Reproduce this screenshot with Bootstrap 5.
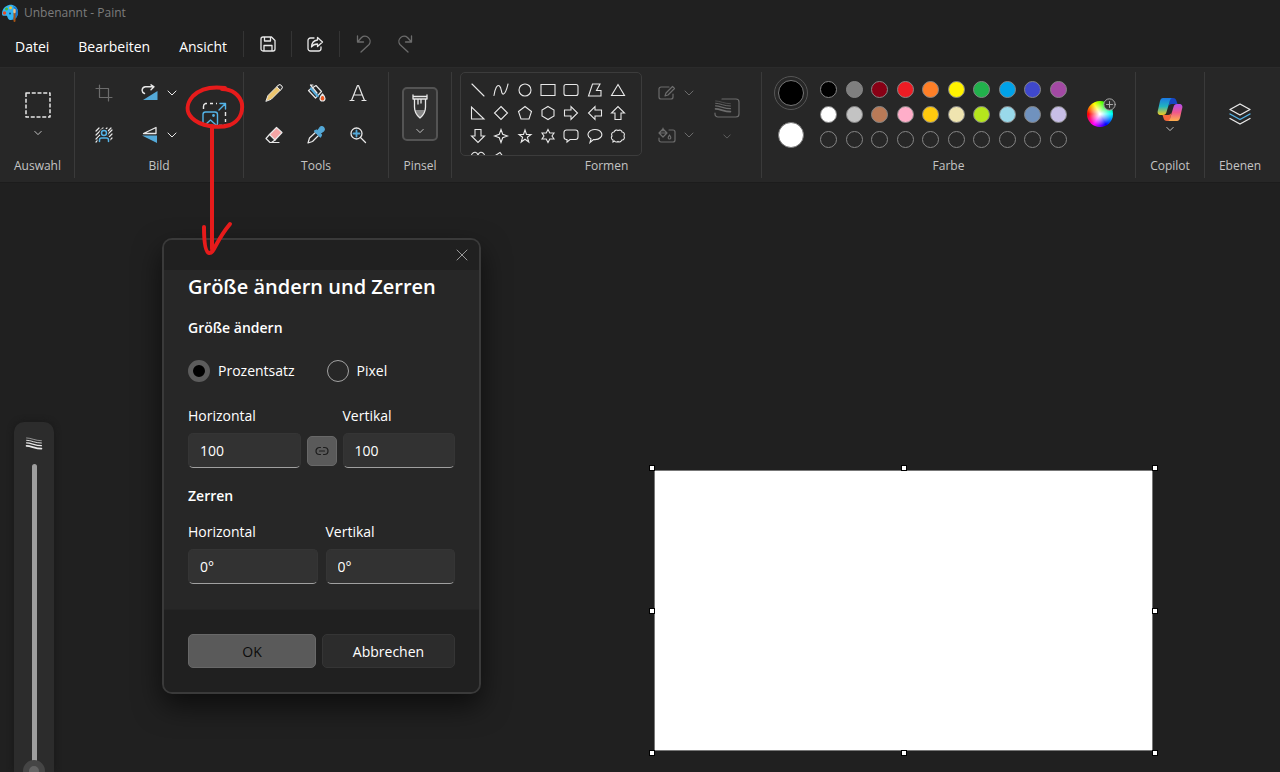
<!DOCTYPE html>
<html lang="de" data-bs-theme="dark">
<head>
<meta charset="utf-8">
<meta name="viewport" content="width=device-width, initial-scale=1">
<title>Unbenannt - Paint</title>
<link href="https://cdn.jsdelivr.net/npm/bootstrap@5.3.0/dist/css/bootstrap.min.css" rel="stylesheet">
<style>
  body { background: #202020; color: #fff; font: 14px/20px "Open Sans", "Noto Sans", sans-serif; }
  svg { display: block; flex: none; fill: none; stroke: #e8e8e8; stroke-linecap: round; stroke-linejoin: round; }
  button.plain { background: none; border: 0; padding: 0; color: inherit; display: flex; align-items: center; justify-content: center; }
  .dim svg { stroke: #6c6c6c; }

  .title-row { height: 25px; padding-left: 2px; gap: 6px; color: #7c7c7c; font-size: 12px; }
  .menu-row { height: 42px; padding: 0 0 4px 1px; }
  .menu-row .menu-word { padding: 5px 14px 0 15px; height: 38px; }
  .menu-row .menu-word:first-child { padding-left: 14px; }
  .menu-row .tool { width: 48px; height: 26px; border-left: 1px solid #343434; }
  .menu-row .tool-group { margin-left: 2px; }
  .menu-row .redo { width: 36px; border: 0; }

  .ribbon { display: grid; grid-template-columns: 74fr 169fr 145fr 63fr 310fr 374fr 69fr 70fr; padding: 4px 5px 4px 1px; background: #272727; border-top: 1px solid #2b2b2b; border-bottom: 1px solid #1c1c1c; }
  .group { display: flex; flex-direction: column; border-right: 1px solid #3a3a3a; min-width: 0; }
  .group:last-child { border-right: 0; }
  .group-label { font-size: 12px; color: #c4c4c4; text-align: center; padding-bottom: 2px; }
  .group-body { height: 84px; display: flex; align-items: center; justify-content: center; }
  .stack { flex-direction: column; gap: 8px; }
  .cells { display: grid; grid-auto-rows: 42px; }
  .cells-image { grid-template-columns: repeat(3, 55px); }
  .cells-tools { grid-template-columns: repeat(3, 42px); }
  .split { gap: 8px !important; }
  .tall { grid-row: 1 / 3; grid-column: 3; }
  .brush { width: 36px; height: 54px; flex-direction: column; gap: 9px; background: #303030 !important; border: 2px solid #545454 !important; border-radius: 5px; }
  .shape-box { width: 182px; height: 84px; padding: 5px 11px 0 5px; overflow: hidden; border: 1px solid #3c3c3c; border-radius: 5px; display: grid; grid-template-columns: repeat(7, 1fr); grid-auto-rows: 23px; }
  .shape-box svg { stroke-width: 1.1; stroke-linejoin: miter; }
  .big-dot { width: 26px; height: 26px; border-radius: 50%; border: 1px solid #777 !important; }
  .chosen { outline: 1px solid #555; outline-offset: 3px; }
  .swatches { width: 255px; display: grid; grid-template-columns: repeat(10, 1fr); grid-auto-rows: 25px; justify-items: center; align-items: center; }
  .swatch { width: 17px; height: 17px; border: 1px solid #858585 !important; border-radius: 50%; }
  .wheel { position: relative; width: 26px; height: 26px; border-radius: 50%; background: radial-gradient(closest-side, #fff 5%, #fff0 90%), conic-gradient(from 270deg, red, yellow, lime, cyan, blue, magenta, red) !important; }
  .wheel svg { position: absolute; top: -3px; right: -3px; }

  .workspace { position: relative; min-height: 0; overflow: hidden; }
  .size-panel { width: 40px; margin: 239px 0 0 14px; padding-top: 15px; background: #2c2c2c; border-radius: 10px 10px 0 0; box-shadow: 0 0 6px #181818; }
  .slider-well { width: 40px; height: 318px; margin-top: 14px; display: flex; align-items: center; justify-content: center; }
  .slider-well input { appearance: none; flex: none; width: 318px; height: 22px; margin: 0; background: none; transform: rotate(-90deg); }
  .slider-well input::-webkit-slider-runnable-track { height: 5px; background: #9e9e9e; border-radius: 3px; }
  .slider-well input::-webkit-slider-thumb { appearance: none; width: 22px; height: 22px; margin-top: -9px; border-radius: 50%; background: #636363; border: 6px solid #454545; }
  .sheet { position: relative; width: 499px; height: 281px; margin: 0 127px 21px auto; background: #fff; border: 1px solid #777; }
  .grip { position: absolute; width: 6px; height: 6px; background: #fff; border: 1px solid #000; }
  .g-top { top: -6px; } .g-mid { top: calc(50% - 3px); } .g-low { bottom: -6px; }
  .g-left { left: -6px; } .g-center { left: calc(50% - 3px); } .g-right { right: -6px; }

  .resize-dialog { position: absolute; top: 55px; left: 162px; width: 319px; background: #272727; border: 2px solid #3a3a3a; border-radius: 10px; box-shadow: 0 12px 28px #0009; overflow: hidden; }
  .dialog-top { height: 30px; padding-right: 11px; background: #202020; }
  .dialog-top svg, .dialog-top button { stroke: #999; }
  .dialog-main { padding: 0 24px 25px; }
  .dialog-main h1 { font-size: 20px; line-height: 34px; font-weight: 600; margin: 0 0 14px; white-space: nowrap; }
  .dialog-main h2 { font-size: 14px; line-height: 20px; font-weight: 600; margin: 0; }
  .choice { gap: 32px; margin: 22px 0 24px; }
  .choice label { gap: 8px; }
  .choice input { appearance: none; width: 22px; height: 22px; margin: 0; border: 1px solid #a2a2a2; border-radius: 50%; }
  .choice input:checked { border: 5px solid #5c5c5c; background: #000; }
  .pair { gap: 6px; }
  .field { flex: 1 1 0; min-width: 0; }
  .field label { display: block; margin-bottom: 7px; }
  .field input { width: 100%; height: 35px; padding: 0 11px; color: #fff; background: #323232; border: 1px solid #353535; border-bottom-color: #a0a0a0; border-radius: 5px; }
  .link-both { width: 30px; height: 30px; margin-bottom: 2px; background: #5a5a5a !important; border: 1px solid #686868 !important; border-radius: 5px; }
  .link-both svg { stroke: #1c1c1c; }
  .dialog-main .skew-title { margin: 18px 0 16px; }
  .dialog-foot { display: grid; grid-template-columns: 127fr 132fr; gap: 6px; padding: 24px; background: #202020; border-top: 1px solid #242424; }
  .dialog-foot .btn { height: 34px; padding: 0; font-size: 14px; border: 1px solid #353535; border-radius: 5px; background: #2c2c2c; color: #fff; }
  .dialog-foot .btn-ok { background: #5a5a5a; border-color: #686868; color: #0c0c0c; }

  .red-mark { position: absolute; left: 180px; top: 80px; z-index: 5; pointer-events: none; stroke: #e61b1b; }
</style>
</head>
<body>
<svg width="0" height="0" class="position-absolute" aria-hidden="true">
  <symbol id="chev" viewBox="0 0 10 6"><path d="M1 1l4 4 4-4"/></symbol>
  <symbol id="waves" viewBox="0 0 18 14"><path stroke-width=".6" d="M1 1c5 0 9 3 16 3"/><path stroke-width="1" d="M1 3.500c5 0 9 3 16 3"/><path stroke-width="1.400" d="M1 6.300c5 0 9 3 16 3"/><path stroke-width="1.900" d="M1 9.500c5 0 9 3 16 3"/></symbol>
</svg>
<div class="vh-100 d-flex flex-column overflow-hidden">
  <header>
    <div class="title-row d-flex align-items-center">
      <svg width="16" height="18" viewBox="0 0 16 18">
        <g stroke="none"><path d="M7 1C10 0 16 2 16 8c0 5-3 8-7 8-3 0-3-2-4-4-1-1-5 1-5-2C0 5 3 2 7 1z" fill="#35b4f2"/>
        <path d="M11 2c3 1 5 3 5 6 0 4-2 7-6 8 3-4 4-8 1-14z" fill="#1675cc"/>
        <circle cx="2.500" cy="9" r="1.700" fill="#e84b26"/><circle cx="4.500" cy="5" r="1.500" fill="#4bbb38"/><circle cx="8.500" cy="3.700" r="1.500" fill="#f3c52c"/><circle cx="8" cy="9.500" r="1" fill="#164b79"/></g>
        <path d="M12.500 9v8" stroke="#a85414" stroke-width="2"/><path d="M12.500 6v2" stroke="#f2c184" stroke-width="2.400"/>
      </svg>
      <span>Unbenannt - Paint</span>
    </div>
    <nav class="menu-row d-flex align-items-center" aria-label="Menü">
      <button class="plain menu-word">Datei</button>
      <button class="plain menu-word">Bearbeiten</button>
      <button class="plain menu-word">Ansicht</button>
      <span class="tool-group d-flex">
        <button class="plain tool" aria-label="Speichern"><svg width="16" height="16" stroke-width="1.300"><path d="M3 1h8.500L15 4.500V13a2 2 0 0 1-2 2H3a2 2 0 0 1-2-2V3a2 2 0 0 1 2-2zM4.500 1v4h6V1M4 15V9.500h8V15"/></svg></button>
        <button class="plain tool" aria-label="Teilen"><svg width="17" height="17" stroke-width="1.300"><path d="M7 2H3.500A2.500 2.500 0 0 0 1 4.500v8A2.500 2.500 0 0 0 3.500 15h8a2.500 2.500 0 0 0 2.500-2.500V11M10.500 1.500l5 4.500-5 4.500V8C7.500 8 6 8.700 4.500 11c.2-4 2.500-6.500 6-7z"/></svg></button>
      </span>
      <span class="dim d-flex">
        <button class="plain tool" aria-label="Rückgängig"><svg width="16" height="18" stroke-width="1.300"><path d="M1.500 1v6h6M1.500 7l4-4.500a5.200 5.200 0 0 1 7.600 7L5 17"/></svg></button>
        <button class="plain tool redo" aria-label="Wiederholen"><svg width="16" height="18" stroke-width="1.300"><path d="M14.500 1v6h-6M14.500 7l-4-4.500a5.200 5.200 0 0 0-7.600 7L11 17"/></svg></button>
      </span>
    </nav>
    <div class="ribbon">
      <section class="group">
        <div class="group-body"><button class="plain stack" aria-label="Auswahl">
          <svg width="26" height="26" stroke-width="1.500"><path stroke-dasharray="4 1.750" stroke-linecap="butt" d="M1 1h24v24H1z"/></svg>
          <svg width="8" height="6" class="mt-1"><use href="#chev"/></svg></button></div>
        <div class="group-label">Auswahl</div>
      </section>
      <section class="group">
        <div class="group-body"><div class="cells cells-image">
          <button class="plain dim" aria-label="Zuschneiden"><svg width="18" height="18" stroke-width="1.200"><path d="M4.500 1v12.500H17M1 4.500h12.500V17"/></svg></button>
          <button class="plain split" aria-label="Drehen"><svg width="18" height="18" stroke-width="1.400"><path d="M3.500 9.500a3.500 3.500 0 0 1 1-6.800H13M10 .8l3 2-3 3"/><path d="M16.500 7v9H2z" fill="#54a9d8" stroke="none"/></svg><svg width="10" height="6"><use href="#chev"/></svg></button>
          <button class="plain tall" aria-label="Größe ändern und Zerren"><svg width="25" height="25" stroke-width="1.400"><path d="M1.500 7V4.500a3 3 0 0 1 2-3H5M8 1.500h3M14 1.500h1M23.500 10v4M23.500 17v3M23.500 22.500l-1 1M20 23.500h-3" stroke-linecap="butt"/><g stroke="#54b4e8"><path d="M17 8l6.500-6.500M18 1.500h5.500V7"/><rect x="1" y="10" width="14.500" height="14" rx="2.500"/><path d="M3 23l5.500-5 5.500 5"/><circle cx="11.500" cy="13.500" r=".7"/></g></svg></button>
          <button class="plain" aria-label="Hintergrund entfernen"><svg width="18" height="16" stroke-width="1.200"><path d="M1 4l3-3M1 8l7-7M1 12L12 1M1 15l4-4M13 4l3-3M12 8l5-5M13 11l4-4M14 14l3-3"/><g stroke="#272727" stroke-width="4" fill="#272727"><circle cx="9" cy="6" r="2.500"/><path d="M4.500 15v-2a2 2 0 0 1 2-2h5a2 2 0 0 1 2 2v2"/></g><g stroke="#54b4e8" stroke-width="1.500"><circle cx="9" cy="6" r="2.500"/><path d="M4.500 14.500v-1.500a2 2 0 0 1 2-2h5a2 2 0 0 1 2 2v1.500"/></g></svg></button>
          <button class="plain split" aria-label="Spiegeln"><svg width="18" height="18" stroke-width="1.300"><path d="M15 1.500V7.500H2.500z"/><path d="M1 9.500h15V17z" fill="#54a9d8" stroke="none"/></svg><svg width="10" height="6"><use href="#chev"/></svg></button>
        </div></div>
        <div class="group-label">Bild</div>
      </section>
      <section class="group">
        <div class="group-body"><div class="cells cells-tools">
          <button class="plain" aria-label="Stift"><svg width="18" height="18"><path d="M1 17l2-5.500L12.800 1.700a2.300 2.300 0 0 1 3.500 3.500L6.500 15z" fill="#edc66e"/><path d="M12 2.500l1-1a2.300 2.300 0 0 1 3.500 3.500l-1 1z" fill="#333"/></svg></button>
          <button class="plain" aria-label="Füllen"><svg width="19" height="18" stroke-width="1.200"><path d="M1.500 6.500L9 1.500l5.500 6L8.500 14z" fill="#222"/><path d="M4 4.500l6.500 7.500" stroke="#54a9d8" stroke-width="2.400"/><path d="M3.500 1l6.500 8M3.500 1h2.500"/><path d="M15.500 10c2 2.300 2.500 3.500 2.500 4.500a2.500 2.500 0 0 1-5 0c0-1 .5-2.200 2.500-4.500z" fill="#ed5a24"/></svg></button>
          <button class="plain" aria-label="Text"><svg width="18" height="18" stroke-width="1.200"><path d="M2.500 16.500L8.500 1.500h1L15.500 16.500M4.500 11h9M1 16.500h4M13 16.500h4"/></svg></button>
          <button class="plain" aria-label="Radierer"><svg width="18" height="18" stroke-width="1.200"><path d="M4.500 8.500L11.500 1.500l5.500 5L10 14z" fill="#f5a5a5"/><path d="M4.500 8.500l-3.500 4L5 16.500h1.500L10 14M6 16.500h8"/></svg></button>
          <button class="plain" aria-label="Farbauswahl"><svg width="18" height="18" stroke-width="1.200"><path d="M9 6l3 3-6.500 6.500-4.500 1.500 1.500-5z"/><g stroke="#54a9d8" fill="#54a9d8"><path d="M7.500 5l2-1 5 5-1 2z"/><path d="M10.500 5l2.500-3.500a2.300 2.300 0 0 1 3.500 3.500L13 7.500z"/></g></svg></button>
          <button class="plain" aria-label="Lupe"><svg width="18" height="18" stroke-width="1.300"><circle cx="7.500" cy="7.500" r="5.500"/><path d="M11.500 11.500l5 5"/><path d="M7.500 4.500v6M4.500 7.500h6" stroke="#54a9d8" stroke-width="1.800"/></svg></button>
        </div></div>
        <div class="group-label">Tools</div>
      </section>
      <section class="group">
        <div class="group-body"><button class="plain brush" aria-label="Pinsel">
          <svg width="16" height="25" stroke-width="1.300"><path d="M3 16h10c-.5 4-3 7-5 8-2-1-4.500-4-5-8z" fill="#888" stroke="none"/><path d="M1 1v4h14V1M1 2.500h14M2.500 5v8c0 5 3 9 5.500 11 2.500-2 5.500-6 5.500-11V5M6 5v5M9 5v4"/></svg>
          <svg width="8" height="6"><use href="#chev"/></svg></button></div>
        <div class="group-label">Pinsel</div>
      </section>
      <section class="group">
        <div class="group-body justify-content-start ps-2">
          <div class="shape-box">
            <button class="plain" aria-label="Linie"><svg width="16" height="16"><path d="M2 2l12 12"/></svg></button>
            <button class="plain" aria-label="Kurve"><svg width="16" height="16"><path d="M1 13.500C2 7 4 2 6.500 4S8 13 10.500 12 14 6 15 2"/></svg></button>
            <button class="plain" aria-label="Ellipse"><svg width="16" height="16"><circle cx="8" cy="8" r="6"/></svg></button>
            <button class="plain" aria-label="Rechteck"><svg width="16" height="16"><path d="M1 2.500h14v11H1z"/></svg></button>
            <button class="plain" aria-label="Abgerundetes Rechteck"><svg width="16" height="16"><rect x="1" y="2.500" width="14" height="11" rx="2"/></svg></button>
            <button class="plain" aria-label="Vieleck"><svg width="16" height="16"><path d="M5.500 2H13l-3.500 6.500H14V14H1.500z"/></svg></button>
            <button class="plain" aria-label="Dreieck"><svg width="16" height="16"><path d="M8 2.500L14.500 13.500h-13z"/></svg></button>
            <button class="plain" aria-label="Rechtwinkliges Dreieck"><svg width="16" height="16"><path d="M1.500 2v12h12.500z"/></svg></button>
            <button class="plain" aria-label="Raute"><svg width="16" height="16"><path d="M8 1.500L14.500 8 8 14.500 1.500 8z"/></svg></button>
            <button class="plain" aria-label="Fünfeck"><svg width="16" height="16"><path d="M8 1.500l6.500 5L12 14H4L1.500 6.500z"/></svg></button>
            <button class="plain" aria-label="Sechseck"><svg width="16" height="16"><path d="M8 1.500l6 3.500v6l-6 3.500L2 11V5z"/></svg></button>
            <button class="plain" aria-label="Pfeil nach rechts"><svg width="16" height="16"><path d="M1.500 5H8V1.500L14.500 8 8 14.500V11H1.500z"/></svg></button>
            <button class="plain" aria-label="Pfeil nach links"><svg width="16" height="16"><path d="M14.500 5H8V1.500L1.500 8 8 14.500V11h6.500z"/></svg></button>
            <button class="plain" aria-label="Pfeil nach oben"><svg width="16" height="16"><path d="M5 14.500V8H1.500L8 1.500 14.500 8H11v6.500z"/></svg></button>
            <button class="plain" aria-label="Pfeil nach unten"><svg width="16" height="16"><path d="M5 1.500V8H1.500L8 14.500 14.500 8H11V1.500z"/></svg></button>
            <button class="plain" aria-label="Vierzackiger Stern"><svg width="16" height="16"><path d="M8 1.500l1.700 4.800L14.500 8 9.700 9.700 8 14.500 6.300 9.700 1.500 8l4.800-1.700z"/></svg></button>
            <button class="plain" aria-label="Fünfzackiger Stern"><svg width="16" height="16"><path d="M8 2l1.500 4.500H14l-3.600 2.800 1.400 4.700L8 11.200 4.200 14l1.400-4.700L2 6.500h4.500z"/></svg></button>
            <button class="plain" aria-label="Sechszackiger Stern"><svg width="16" height="16"><path d="M8 1.500l1.800 3.500H14l-2 3 2 3H9.800L8 14.500 6.200 11H2l2-3-2-3h4.200z"/></svg></button>
            <button class="plain" aria-label="Abgerundete Legende"><svg width="16" height="16"><path d="M3.500 2h9A2.500 2.500 0 0 1 15 4.500V9a2.500 2.500 0 0 1-2.500 2.500H7L4 14v-2.500h-.5A2.500 2.500 0 0 1 1 9V4.500A2.500 2.500 0 0 1 3.500 2z"/></svg></button>
            <button class="plain" aria-label="Ovale Legende"><svg width="16" height="16"><path d="M4 11C-2 7 2 1.500 8 1.500s8.500 5 5.500 8c-2 2-4.500 2.300-7 2L3 14.500z"/></svg></button>
            <button class="plain" aria-label="Wolkenlegende"><svg width="16" height="16"><path d="M3 12C1 11 1 9 2 8 1 6 2 4 4 4c1-2 3-2.500 4-1.500 2-1 4 0 4 1.500 2 0 3 2 2 4 1 2 0 4-2 4-1 2-3 2.500-4 1.500-1 1-3 .5-3.500-.5L3 14z"/></svg></button>
            <button class="plain" aria-label="Herz"><svg width="16" height="16"><path d="M8 14C2 9 0 6 2 3s5-2 6 1c1-3 4-4 6-1s0 6-6 11z"/></svg></button>
            <button class="plain" aria-label="Blitz"><svg width="16" height="16"><path d="M1.500 5L7 1.500l3 4 4 8.500-7-4z"/></svg></button>
          </div>
          <div class="cells dim ms-3">
            <button class="plain split" aria-label="Kontur"><svg width="18" height="16" stroke-width="1.200"><path d="M11 2H3a2 2 0 0 0-2 2v8a2 2 0 0 0 2 2h10a2 2 0 0 0 2-2V9M7 11l1-3 6.500-6.500 2 2L10 10z"/></svg><svg width="10" height="6"><use href="#chev"/></svg></button>
            <button class="plain split" aria-label="Füllung"><svg width="18" height="16" stroke-width="1.200"><path d="M11 3h4a2 2 0 0 1 2 2v8a2 2 0 0 1-2 2H3a2 2 0 0 1-2-2v-2M5 1v3M5 2l4 4-4 4-4-4zM1 6h8M11.500 8c2 2.500 1.500 4 0 4s-2-1.500 0-4z"/></svg><svg width="10" height="6"><use href="#chev"/></svg></button>
          </div>
          <button class="plain dim stack gap-3 ms-3 ps-1 pt-2" aria-label="Strichstärke"><svg width="26" height="20" stroke-width="1.200"><path d="M8 1h14a3 3 0 0 1 3 3v12a3 3 0 0 1-3 3H4a3 3 0 0 1-3-3v-1"/><use href="#waves" width="18" height="13" y="2"/></svg><svg width="8" height="5"><use href="#chev"/></svg></button>
        </div>
        <div class="group-label">Formen</div>
      </section>
      <section class="group">
        <div class="group-body justify-content-start">
          <div class="d-flex flex-column gap-3 ms-3 me-2 pe-1">
            <button class="plain big-dot chosen" aria-label="Farbe 1" style="background:#000"></button>
            <button class="plain big-dot" aria-label="Farbe 2" style="background:#fff"></button>
          </div>
          <div class="swatches" id="swatches"></div>
          <button class="plain wheel ms-3" aria-label="Farben bearbeiten"><svg width="13" height="13"><g stroke="#aaa"><circle cx="6.500" cy="6.500" r="5.700" fill="#333"/><path d="M6.500 3.500v6M3.500 6.500h6"/></g></svg></button>
        </div>
        <div class="group-label">Farbe</div>
      </section>
      <section class="group">
        <div class="group-body"><button class="plain stack gap-1" aria-label="Copilot">
          <svg width="26" height="25">
            <defs>
              <linearGradient id="cpA" x1="0" y1="0" x2="0" y2="1"><stop offset="0" stop-color="#1b78e4"/><stop offset=".5" stop-color="#22b4c0"/><stop offset="1" stop-color="#f4cb1c"/></linearGradient>
              <linearGradient id="cpB" x1="0" y1="0" x2="0" y2="1"><stop offset="0" stop-color="#b44df0"/><stop offset=".5" stop-color="#f0588a"/><stop offset="1" stop-color="#ffb04c"/></linearGradient>
            </defs>
            <g stroke="none"><path d="M13 1h3c2 0 3 1 3.500 3l1 3H15c-2 0-3 1-3.500 3z" fill="#1746c4"/><path d="M13 24h-3c-2 0-3-1-3.500-3l-1-3H11c2 0 3-1 3.500-3z" fill="#f4673c"/>
            <path d="M6 1h9c-1.500.5-2 2-2.500 4L9.500 15c-.5 2-1.500 3-3.500 3H4c-3 0-4-2-3-5L3 4c.5-2 1.500-3 3-3z" fill="url(#cpA)"/>
            <path d="M20 24h-9c1.500-.5 2-2 2.500-4l3-10c.5-2 1.500-3 3.500-3h2c3 0 4 2 3 5l-2 9c-.5 2-1.500 3-3 3z" fill="url(#cpB)"/></g>
          </svg>
          <svg width="8" height="6"><use href="#chev"/></svg></button></div>
        <div class="group-label">Copilot</div>
      </section>
      <section class="group">
        <div class="group-body"><button class="plain" aria-label="Ebenen"><svg width="24" height="24" stroke-width="1.400"><path d="M12 2l10 5.500-10 5.500L2 7.500z"/><path d="M2 12l10 5.500L22 12" stroke="#54b4e8"/><path d="M2 16.500L12 22l10-5.500"/></svg></button></div>
        <div class="group-label">Ebenen</div>
      </section>
    </div>
  </header>

  <main class="workspace d-flex flex-fill">
    <aside class="size-panel">
      <svg width="18" height="13" class="mx-auto"><use href="#waves"/></svg>
      <div class="slider-well"><input type="range" min="0" max="100" value="0" aria-label="Größe"></div>
    </aside>
    <div class="sheet align-self-end">
      <i class="grip g-top g-left"></i><i class="grip g-top g-center"></i><i class="grip g-top g-right"></i>
      <i class="grip g-mid g-left"></i><i class="grip g-mid g-right"></i>
      <i class="grip g-low g-left"></i><i class="grip g-low g-center"></i><i class="grip g-low g-right"></i>
    </div>

    <form class="resize-dialog" role="dialog" aria-labelledby="dlgTitle">
      <div class="dialog-top d-flex align-items-center justify-content-end"><button type="button" class="plain" aria-label="Schließen"><svg width="12" height="12"><path d="M1 1l10 10M11 1L1 11"/></svg></button></div>
      <div class="dialog-main">
        <h1 id="dlgTitle">Größe ändern und Zerren</h1>
        <h2>Größe ändern</h2>
        <div class="choice d-flex">
          <label class="d-flex align-items-center"><input type="radio" name="unit" checked>Prozentsatz</label>
          <label class="d-flex align-items-center"><input type="radio" name="unit">Pixel</label>
        </div>
        <div class="pair d-flex align-items-end">
          <div class="field"><label for="sizeH">Horizontal</label><input id="sizeH" type="text" value="100"></div>
          <button type="button" class="plain link-both" aria-label="Seitenverhältnis beibehalten"><svg width="14" height="10"><path stroke-width="1.200" d="M5.500 1.500H4.500a3.500 3.500 0 0 0 0 7h1M8.500 1.500h1a3.500 3.500 0 0 1 0 7h-1M4.500 5h5"/></svg></button>
          <div class="field"><label for="sizeV">Vertikal</label><input id="sizeV" type="text" value="100"></div>
        </div>
        <h2 class="skew-title">Zerren</h2>
        <div class="d-flex gap-2">
          <div class="field"><label for="skewH">Horizontal</label><input id="skewH" type="text" value="0°"></div>
          <div class="field"><label for="skewV">Vertikal</label><input id="skewV" type="text" value="0°"></div>
        </div>
      </div>
      <div class="dialog-foot">
        <button type="button" class="btn btn-ok">OK</button>
        <button type="button" class="btn">Abbrechen</button>
      </div>
    </form>
  </main>
</div>

<svg class="red-mark" width="70" height="180" stroke-width="4" aria-hidden="true">
  <path d="M45 8C30 6 20 9 13 16 6 24 6 32 12 38c8 8 26 11 38 7 9-4 13-12 12-21C60 15 52 9 42 9"/>
  <path d="M32 46v123M24 147c0 12 1 25 5 26 5 1 6-11 21-29"/>
</svg>

<script src="https://cdn.jsdelivr.net/npm/bootstrap@5.3.0/dist/js/bootstrap.bundle.min.js"></script>
<script>
  const palette = ['#000000','#7f7f7f','#880015','#ed1c24','#ff7f27','#fff200','#22b14c','#00a2e8','#3f48cc','#a349a4',
    '#ffffff','#c3c3c3','#b97a57','#ffaec9','#ffc90e','#efe4b0','#b5e61d','#99d9ea','#7092be','#c8bfe7'];
  const box = document.getElementById('swatches');
  for (let i = 0; i < 30; i++) {
    const b = document.createElement('button');
    b.className = 'plain swatch';
    b.setAttribute('aria-label', 'Farbfeld ' + (i + 1));
    if (palette[i]) b.style.background = palette[i];
    box.append(b);
  }
</script>
</body>
</html>
